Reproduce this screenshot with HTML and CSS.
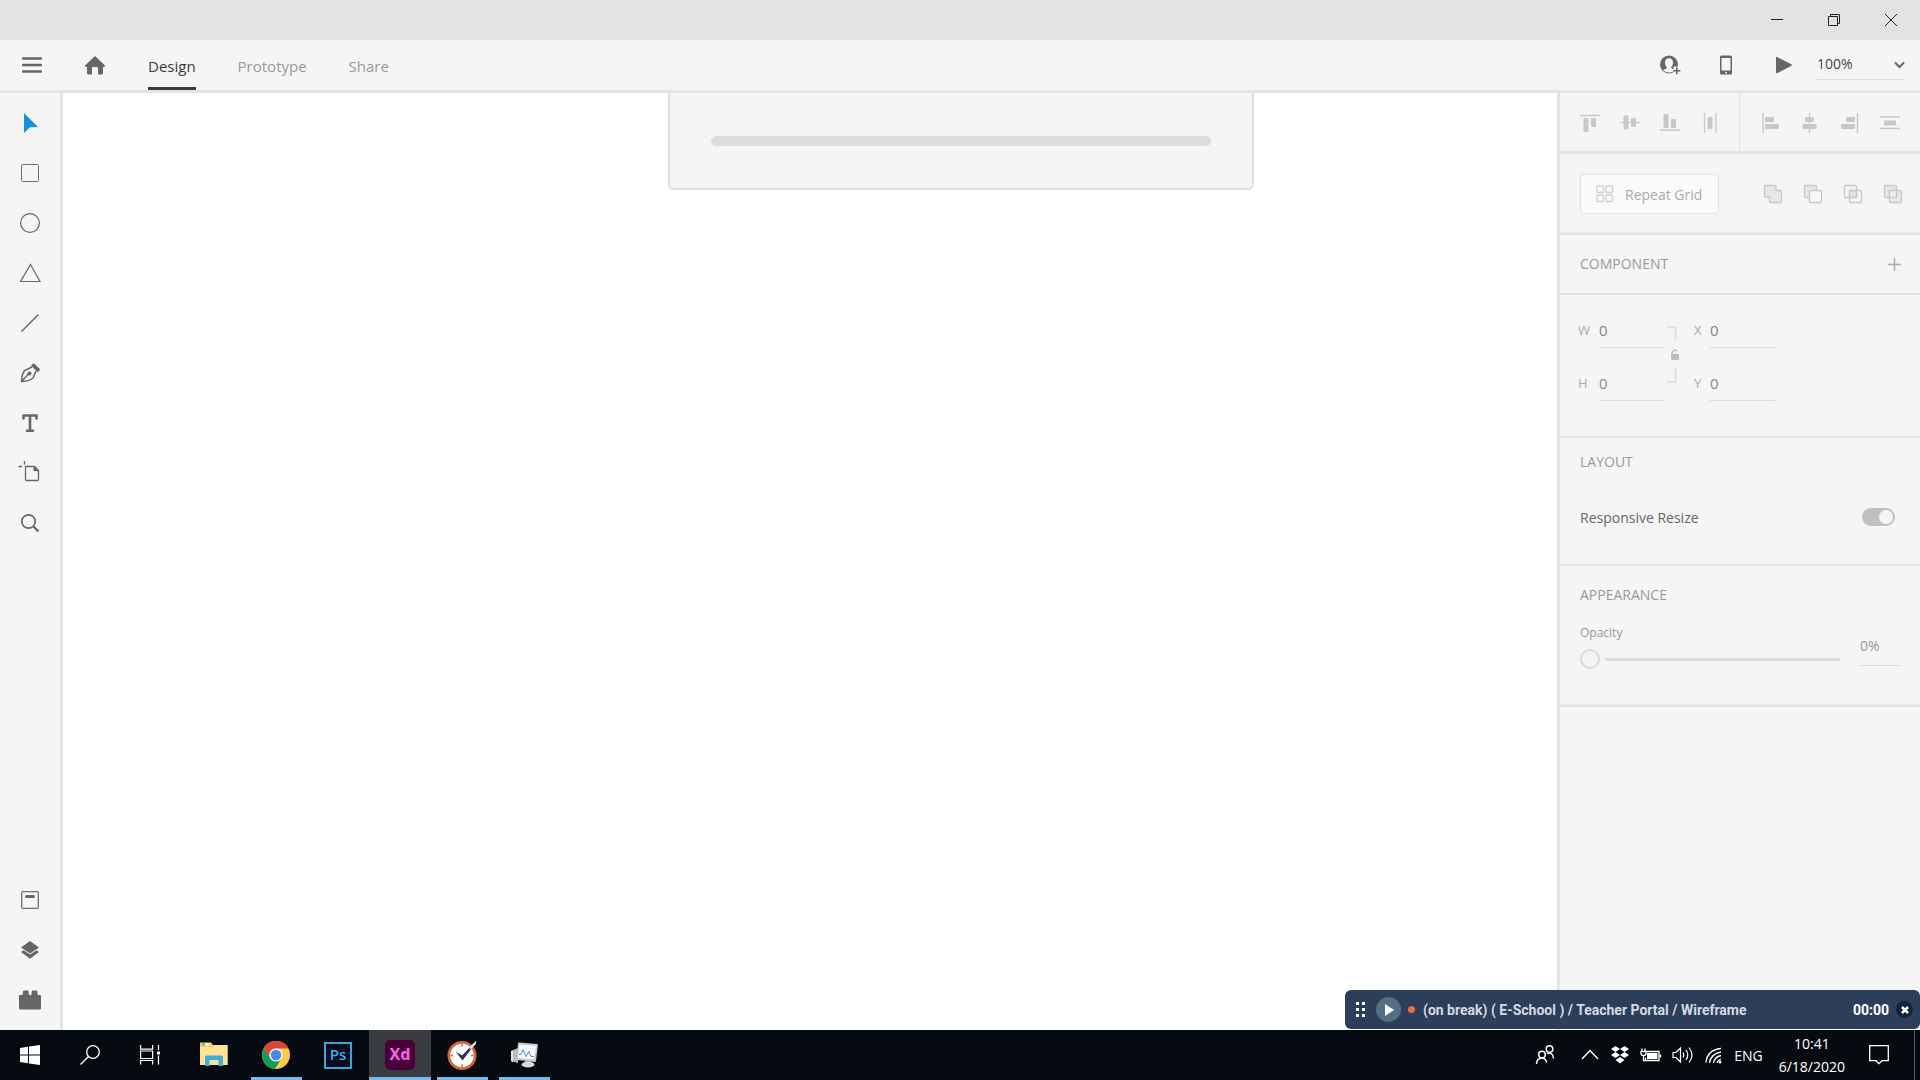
FILE: index.html
```html
<!DOCTYPE html>
<html lang="en">
<head>
  <meta charset="UTF-8">
  <title>Design</title>
  <meta name="viewport" content="width=device-width, initial-scale=1">
  <link rel="stylesheet" href="styles.css">
</head>
<body>
  <header class="titlebar">
    <button class="win-button" aria-label="Minimize"><svg width="12" height="12"><path d="M0 5.5h12" stroke="#222"/></svg></button>
    <button class="win-button" aria-label="Restore"><svg width="12" height="12" fill="none" stroke="#222"><path d="M.5 2.5h9v9h-9zM2.5 2.5v-2h9v9h-2"/></svg></button>
    <button class="win-button" aria-label="Close"><svg width="12" height="12" stroke="#222"><path d="M0 0l12 12M12 0L0 12"/></svg></button>
  </header>

  <div class="toolbar">
    <button class="icon-button menu-button" aria-label="Menu"><svg width="20" height="16"><path d="M1 1.5h18M1 8h18M1 14.5h18" stroke="#666" stroke-width="2.4" stroke-linecap="round"/></svg></button>
    <button class="icon-button home-button" aria-label="Home"><svg width="20" height="19" fill="#666"><path d="M10 0L20 9.500Q20 11 18.500 11H18v6q0 1.500-1.500 1.500H13V12q0-1-1-1H8q-1 0-1 1v6.500H3.500Q2 18.500 2 17v-6H1.500Q0 11 0 9.500z"/></svg></button>
    <nav class="tabs">
      <a class="tab active" href="#design">Design</a>
      <a class="tab" href="#prototype">Prototype</a>
      <a class="tab" href="#share">Share</a>
    </nav>
    <div class="toolbar-right">
      <button class="icon-button" aria-label="Invite"><svg width="24" height="20"><circle cx="11" cy="9.500" r="9" fill="#666"/><path d="M11 3.200c2.600 0 4 1.800 4 4.300 0 1.900-.7 3.300-1.600 4.200-.3 1.300 0 1.900 1.300 2.400l2.300.9q-2.500 2.500-6 2.500t-6-2.500l2.300-.9c1.300-.5 1.600-1.100 1.300-2.400C7.700 10.800 7 9.400 7 7.500c0-2.500 1.400-4.300 4-4.300z" fill="#f5f5f5"/><path d="M15.500 11.500H22v8h-6.500z" fill="#f5f5f5"/><path d="M18.800 12.200v7M15.300 15.700h7" stroke="#666" stroke-width="1.600"/></svg></button>
      <button class="icon-button" aria-label="Mobile preview"><svg width="13" height="20"><path fill="#666" fill-rule="evenodd" d="M1.500.5h9q1.500 0 1.500 1.500v16q0 1.500-1.500 1.500h-9Q0 19.500 0 18V2Q0 .5 1.500.5zM1.500 3v12.500h9V3zM5 17v1.200h2V17z"/></svg></button>
      <button class="icon-button" aria-label="Play"><svg width="16" height="18"><path fill="#666" d="M0 1.500Q0 .5 1 1l14.500 7.300q.8.700 0 1.400L1 17.200q-1 .3-1-.7z"/></svg></button>
      <div class="zoom-box">
        <select class="zoom-select" aria-label="Zoom">
          <option>100%</option>
        </select>
        <svg class="zoom-arrow" width="11" height="8"><path d="M1 1.500l4.500 4.500L10 1.500" fill="none" stroke="#666" stroke-width="2"/></svg>
      </div>
    </div>
  </div>

  <main class="workspace">
    <aside class="tools">
      <button class="tool" aria-label="Select"><svg width="20" height="20"><path fill="#1391e9" d="M4 0l14 14-8 .3L4 20z"/></svg></button>
      <button class="tool" aria-label="Rectangle"><svg width="20" height="20"><rect x="1.500" y="1.500" width="17" height="17" rx="1" fill="none" stroke="#707070"/></svg></button>
      <button class="tool" aria-label="Ellipse"><svg width="20" height="20"><circle cx="10" cy="10" r="9.400" fill="none" stroke="#666" stroke-width="1.200"/></svg></button>
      <button class="tool" aria-label="Polygon"><svg width="22" height="20"><path d="M11.500 1.500l9.500 17H1.500z" fill="none" stroke="#666" stroke-width="1.200"/></svg></button>
      <button class="tool" aria-label="Line"><svg width="20" height="20"><path d="M1.500 18.500l17-17" stroke="#666" stroke-width="1.500"/></svg></button>
      <button class="tool" aria-label="Pen"><svg width="20" height="20"><path d="M12 4L4.500 7.500Q1.500 12 1.600 18.400 8.500 18.500 13 15l3-7M2 18l7-7.500" fill="none" stroke="#666" stroke-width="1.500"/><circle cx="9.500" cy="10.500" r="2" fill="#666"/><path d="M13 .8q.7-.8 1.400 0l5.200 5q.7.800 0 1.500l-1.800 1.900-6.800-6.500z" fill="#666"/></svg></button>
      <button class="tool" aria-label="Text"><svg width="20" height="20"><path d="M3.500 5.500V2.500h13v3M10 2.500v15M7 17.800h6" fill="none" stroke="#666" stroke-width="2.600" stroke-linecap="round" stroke-linejoin="round"/></svg></button>
      <button class="tool" aria-label="Artboard"><svg width="24" height="24"><path d="M7.500 5.500h9l4 4v9q0 1-1 1h-11q-1 0-1-1zM.5 5.500H4M6.500 0v3.500" fill="none" stroke="#666" stroke-width="1.300"/><path d="M15.500 5l5.500 5h-5.500z" fill="#666"/></svg></button>
      <button class="tool" aria-label="Zoom"><svg width="20" height="20"><circle cx="8.500" cy="8.500" r="6.700" fill="none" stroke="#666" stroke-width="1.700"/><path d="M13.500 13.500l5 5" stroke="#666" stroke-width="2.200"/></svg></button>
      <button class="tool tool-bottom" aria-label="Assets"><svg width="20" height="20"><rect x="1.700" y="1.700" width="16.600" height="16.600" rx="1" fill="none" stroke="#707070" stroke-width="1.300"/><rect x="5" y="5" width="10" height="3" rx="1.500" fill="#666"/></svg></button>
      <button class="tool" aria-label="Layers"><svg width="20" height="20" fill="#666"><path d="M10 1l9 6.500-9 6-9-6z"/><path d="M1 12l2.500-1.700L10 14.600l6.500-4.300L19 12l-9 6.800z"/></svg></button>
      <button class="tool" aria-label="Plugins"><svg width="22" height="20" fill="#666"><path d="M1 5h2.500l.5-3.500Q4 .5 5 .5h3.500q1 0 1 1L10 5h2.300l.5-3.500q0-1 1-1h3.500q1 0 1 1L18.800 5H21q1 0 1 1v12.500q0 1-1 1H1q-1 0-1-1V6q0-1 1-1z"/></svg></button>
    </aside>

    <section class="canvas">
      <div class="artboard-card"><div class="artboard-line"></div></div>
    </section>

    <aside class="panel">
      <div class="align-row">
        <div class="align-group">
          <button class="prop-icon" aria-label="Align top"><svg width="20" height="20"><path d="M0 2.500h20" stroke="#c8c8c8" stroke-width="1.600"/><rect x="3.500" y="5" width="5" height="14" rx="1"/><rect x="11" y="5" width="5" height="9" rx="1"/></svg></button>
          <button class="prop-icon" aria-label="Align middle"><svg width="20" height="20"><path d="M0 9.500h20" stroke="#c8c8c8" stroke-width="1.300"/><rect x="3.500" y="2.500" width="5" height="14" rx="1"/><rect x="11" y="5" width="5" height="9" rx="1"/></svg></button>
          <button class="prop-icon" aria-label="Align bottom"><svg width="20" height="20"><path d="M0 17h20" stroke="#c8c8c8" stroke-width="1.600"/><rect x="3.500" y="1" width="5" height="14" rx="1"/><rect x="11" y="6" width="5" height="9" rx="1"/></svg></button>
          <button class="prop-icon" aria-label="Distribute horizontally"><svg width="20" height="20"><path d="M4.500 0v20M16 0v20" stroke="#c8c8c8" stroke-width="1.300"/><rect x="7.500" y="4" width="5" height="12" rx="1"/></svg></button>
        </div>
        <div class="align-group align-end">
          <button class="prop-icon" aria-label="Align left"><svg width="20" height="20"><path d="M3 0v20" stroke="#c8c8c8" stroke-width="1.500"/><rect x="5" y="4" width="9" height="5" rx="1"/><rect x="5" y="11" width="14" height="5" rx="1"/></svg></button>
          <button class="prop-icon" aria-label="Align center"><svg width="20" height="20"><path d="M9.500 0v20" stroke="#c8c8c8" stroke-width="1.300"/><rect x="5" y="4" width="9" height="5" rx="1"/><rect x="2.500" y="11" width="14" height="5" rx="1"/></svg></button>
          <button class="prop-icon" aria-label="Align right"><svg width="20" height="20"><path d="M17.500 0v20" stroke="#c8c8c8" stroke-width="1.500"/><rect x="6" y="4" width="9" height="5" rx="1"/><rect x="1" y="11" width="14" height="5" rx="1"/></svg></button>
          <button class="prop-icon" aria-label="Distribute vertically"><svg width="20" height="20"><path d="M0 4h20M0 15.500h20" stroke="#c8c8c8" stroke-width="1.300"/><rect x="4" y="7.500" width="12" height="5" rx="1"/></svg></button>
        </div>
      </div>

      <div class="grid-row">
        <button class="repeat-grid"><svg width="18" height="18" fill="none" stroke="#cfcfcf" stroke-width="1.400"><rect x="1" y="1" width="6.500" height="6.500" rx="1"/><rect x="10" y="1" width="6.500" height="6.500" rx="1"/><rect x="1" y="10" width="6.500" height="6.500" rx="1"/><rect x="10" y="10" width="6.500" height="6.500" rx="1"/></svg>Repeat Grid</button>
        <div class="bool-group">
          <button class="prop-icon bool" aria-label="Add"><svg width="20" height="20"><path fill="#e7e7e7" d="M2 1.500h10q1 0 1 1v4h4.500q1 0 1 1v10q0 1-1 1H7.500q-1 0-1-1V13H2.500q-1 0-1-1V2q0-.5.500-.5z"/></svg></button>
          <button class="prop-icon bool" aria-label="Subtract"><svg width="20" height="20"><rect x="1.500" y="1.500" width="12" height="12" rx="1" fill="#e7e7e7"/><rect x="6.500" y="6.500" width="12" height="12" rx="1" fill="#f8f8f8"/></svg></button>
          <button class="prop-icon bool" aria-label="Intersect"><svg width="20" height="20"><rect x="6.500" y="6.500" width="7" height="7" fill="#e2e2e2"/><rect x="1.500" y="1.500" width="12" height="12" rx="1" fill="none"/><rect x="6.500" y="6.500" width="12" height="12" rx="1" fill="none"/></svg></button>
          <button class="prop-icon bool" aria-label="Exclude overlap"><svg width="20" height="20"><rect x="1.500" y="1.500" width="12" height="12" rx="1" fill="#e7e7e7"/><rect x="6.500" y="6.500" width="12" height="12" rx="1" fill="#e7e7e7"/><rect x="6.500" y="6.500" width="7" height="7" fill="#eee"/></svg></button>
        </div>
      </div>

      <div class="component-row">
        <h2 class="heading">COMPONENT</h2>
        <button class="icon-button" aria-label="Add component"><svg width="13" height="13"><path d="M6.500 0v13M0 6.500h13" stroke="#b0b0b0" stroke-width="1.500"/></svg></button>
      </div>

      <div class="transform">
        <div class="field-column">
          <label class="field"><span>W</span><input type="text" value="0"></label>
          <label class="field"><span>H</span><input type="text" value="0"></label>
        </div>
        <svg class="link" width="12" height="60"><path d="M0 2h8.500v13M0 57h8.500V43" fill="none" stroke="#dcdcdc" stroke-width="1.500"/><path d="M5 30v-2.500a3 3 0 0 1 5-1.500" fill="none" stroke="#c0c0c0" stroke-width="1.500"/><rect x="4" y="29" width="8" height="6" rx="1" fill="#bdbdbd"/></svg>
        <div class="field-column">
          <label class="field field-pos"><span>X</span><input type="text" value="0"></label>
          <label class="field field-pos"><span>Y</span><input type="text" value="0"></label>
        </div>
      </div>

      <div class="layout-section">
        <h2 class="heading">LAYOUT</h2>
        <div class="resize-row">
          <label for="resize">Responsive Resize</label>
          <input class="toggle" type="checkbox" id="resize" checked>
        </div>
      </div>

      <div class="appearance">
        <h2 class="heading">APPEARANCE</h2>
        <div class="opacity-row">
          <div class="opacity-main">
            <label for="opacity">Opacity</label>
            <input class="slider" type="range" id="opacity" min="0" max="100" value="0">
          </div>
          <input class="opacity-value" type="text" value="0%" aria-label="Opacity value">
        </div>
      </div>
    </aside>
  </main>

  <div class="timer">
    <svg class="timer-grip" width="10" height="15" fill="#fff"><path d="M0 0h3v3H0zM6 0h3v3H6zM0 6h3v3H0zM6 6h3v3H6zM0 12h3v3H0zM6 12h3v3H6z"/></svg>
    <button class="timer-play" aria-label="Start timer"><svg width="9" height="12"><path d="M0 0l9 6-9 6z" fill="#fff"/></svg></button>
    <span class="timer-dot"></span>
    <span class="timer-task">(on break) ( E-School ) / Teacher Portal / Wireframe</span>
    <span class="timer-time">00:00</span>
    <button class="timer-close" aria-label="Close timer"><svg width="8" height="8"><path d="M1 1l6 6M7 1L1 7" stroke="#fff" stroke-width="2.500"/></svg></button>
  </div>

  <footer class="taskbar">
    <button class="start-item" aria-label="Start"><svg width="20" height="20" fill="#fff"><path d="M0 3l8-1.200v7.700H0zM9 1.600L20 0v9.500H9zM0 10.500h8v7.700L0 17zM9 10.500h11V20L9 18.400z"/></svg></button>
    <button class="start-item" aria-label="Search"><svg width="20" height="20" fill="none" stroke="#fff" stroke-width="1.300"><circle cx="13" cy="7" r="6.300"/><path d="M8.500 11.500L.5 19.500"/></svg></button>
    <button class="start-item" aria-label="Task view"><svg width="20" height="20" fill="none" stroke="#fff" stroke-width="1.200"><path d="M.6 0v4.200h12V0M.6 19.500v-4h12v4M.6 6h12v7.500H.6zM18.500 0v5M18.500 10.500v9"/><path d="M17 6.500h3v3h-3z" fill="#fff" stroke="none"/></svg></button>
    <div class="apps">
      <button class="app" aria-label="Files"><svg width="28" height="28"><path d="M0 1.500h11l2 2.500h14.500v20H0z" fill="#f9ce62"/><path d="M0 6h13l2-2h12.500v20H0z" fill="#ffe394"/><path d="M2 2.500h7v2H2z" fill="#fff"/><path d="M2 2.500h3v2H2z" fill="#42b979"/><path d="M5 25v-9q0-1.500 1.500-1.500h15q1.500 0 1.500 1.500v9h-4.500v-6h-9v6z" fill="#40afd8"/></svg></button>
      <button class="app open" aria-label="Chrome"><svg width="28" height="28"><circle cx="14" cy="14" r="14" fill="#ffcd42"/><path d="M1.900 7a14 14 0 0 0 11 21l6.600-10.500L14 14 8.500 17.500z" fill="#0f9d58"/><path d="M1.900 7A14 14 0 0 1 26.500 7.500H14A6.500 6.500 0 0 0 8 17z" fill="#db4437"/><circle cx="14" cy="14" r="6.600" fill="#f1f1f1"/><circle cx="14" cy="14" r="5.200" fill="#4587f3"/></svg></button>
      <button class="app" aria-label="Photoshop"><span class="ps">Ps</span></button>
      <button class="app open current" aria-label="XD"><span class="xd">Xd</span></button>
      <button class="app open" aria-label="Time tracker"><svg width="30" height="30"><circle cx="15" cy="15.500" r="14.500" fill="#d9672d"/><circle cx="15" cy="15.500" r="11.800" fill="#fff"/><path d="M15 4v2.500M15 24.500V27M3.500 15.500H6M24 15.500h2.500" stroke="#d9672d" stroke-width="1.500"/><path d="M8.500 11.500l6.500 4L26 4l1 1.500L15.500 20.500z" fill="#29364b"/><path d="M22 7.500L29.500.5l-1 4-5 5z" fill="#e4e4e4"/></svg></button>
      <button class="app open" aria-label="Resource monitor"><svg width="28" height="28"><path d="M1 10l7-3v15l-7-2z" fill="#b9bcbd"/><path d="M1 10l2-.5v12L1 20z" fill="#e4e4e4"/><path d="M8 2.500q0-1 1-1L27 3q1 0 .9 1L26 20q-.2 1-1 .9L7.500 19q-1 0-.9-1z" fill="#c8cacb"/><path d="M9.500 3.500L26 5l-1.800 13.500L8 17z" fill="#f7faff"/><path d="M9 13.500h2l2-5 3 7 3-5 2 5h3" fill="none" stroke="#4d91d4"/><path d="M15 20h6l1 3h-7z" fill="#a5a8a9"/><ellipse cx="18" cy="23.500" rx="6.500" ry="3" fill="#dadcdd"/></svg></button>
    </div>

    <div class="tray">
      <svg class="people" width="20" height="20" fill="none" stroke="#fff" stroke-width="1.500"><circle cx="14.500" cy="4" r="3.300"/><circle cx="7" cy="9.500" r="3.300"/><path d="M1.500 19q0-5.500 5.500-6 4 .3 4.500 4.500M12 8.500q6-2 6.500 5"/></svg>
      <svg width="20" height="20" fill="none" stroke="#fff" stroke-width="1.400"><path d="M2 14l8-8.500 8 8.500"/></svg>
      <svg width="20" height="20" fill="#fff"><path d="M5.500 1L10 4 5.500 7 1 4zM14.500 1L19 4l-4.500 3L10 4zM5.500 7l4.500 3-4.500 3L1 10zM14.500 7l4.500 3-4.500 3-4.500-3zM10 12l4.500 3-4.500 3.500L5.500 15z"/></svg>
      <svg width="22" height="20"><path d="M5.500 6.500H19v9H5.500v-3M20.500 9.500v3M2 3.500v3M5 3.500v3M1 6.500h5v2q0 2-2.500 2T1 8.500zM3.500 10.500v5h2" fill="none" stroke="#fff" stroke-width="1.300"/><path d="M7 8h10.500v6H7z" fill="#fff"/></svg>
      <svg width="22" height="20" fill="none" stroke="#fff" stroke-width="1.200"><path d="M1 7.500h3L8.500 3v14L4 12.500H1zM11 7.500q1.500 2.500 0 5M14 5q3.500 5 0 10M17 2.500q6 7.500 0 15"/></svg>
      <svg width="20" height="20" fill="none" stroke="#fff" stroke-width="1.300"><path d="M2 17.500Q3 5 17 3.500M5.500 18Q6.500 9 17 7M9.500 18q1-6 7.500-7.500M13 18q.5-3 4-4"/><circle cx="16" cy="17" r="1.500" fill="#fff" stroke="none"/></svg>
      <span class="lang">ENG</span>
      <div class="clock"><span>10:41</span><span>6/18/2020</span></div>
      <svg class="notice" width="20" height="20" fill="none" stroke="#fff" stroke-width="1.300"><path d="M.7.7h18.600v15H13l-3 3-3-3H.7z"/></svg>
    </div>
  </footer>
</body>
</html>
```

FILE: styles.css
```css
:root {
  --bg: #f5f5f5;
  --line: #e3e3e3;
  --title: #e3e3e3;
  --icon-off: #c8c8c8;
  --text: #444;
  --muted: #999;
  --taskbar: #060b12;
}

* { box-sizing: border-box; }

body {
  margin: 0;
  height: 100vh;
  display: flex;
  flex-direction: column;
  font-family: "Open Sans", "Noto Sans", sans-serif;
  font-size: 14px;
  color: var(--text);
  background: var(--bg);
  overflow: hidden;
}

button, input, select {
  font: inherit;
  color: inherit;
  background: none;
  border: 0;
  padding: 0;
  margin: 0;
}

svg { display: block; flex: none; }

/* window title */
.titlebar {
  height: 40px;
  flex: none;
  display: flex;
  justify-content: flex-end;
  padding-right: 1px;
  background: var(--title);
}

.win-button {
  width: 57px;
  display: grid;
  place-items: center;
}

/* top toolbar */
.toolbar {
  height: 53px;
  flex: none;
  display: flex;
  align-items: stretch;
  border-bottom: 3px solid var(--line);
}

.icon-button {
  display: grid;
  place-items: center;
}

.menu-button { width: 64px; }
.home-button { width: 62px; }

.tabs {
  display: flex;
  gap: 42px;
  margin-left: 22px;
}

.tab {
  padding-top: 14px;
  font-size: 15px;
  line-height: 24px;
  color: var(--muted);
  text-decoration: none;
}

.tab.active {
  color: #3c3c3c;
  border-bottom: 3px solid #3c3c3c;
}

.toolbar-right {
  margin-left: auto;
  display: flex;
}

.toolbar-right .icon-button { width: 57px; }

.zoom-box {
  position: relative;
  width: 88px;
  height: 30px;
  margin: 10px 15px 0 5px;
  border-bottom: 1px solid #ddd;
}

.zoom-select {
  appearance: none;
  width: 100%;
  height: 26px;
}

.zoom-arrow {
  position: absolute;
  right: 0;
  top: 11px;
  pointer-events: none;
}

/* main area */
.workspace {
  flex: 1;
  min-height: 0;
  display: flex;
}

.tools {
  width: 63px;
  flex: none;
  display: flex;
  flex-direction: column;
  padding: 5px 0;
  border-right: 3px solid var(--line);
}

.tool {
  height: 50px;
  display: grid;
  place-items: center;
}

.tool-bottom { margin-top: auto; }

.canvas {
  flex: 1;
  position: relative;
  overflow: hidden;
  background: #fff;
}

.artboard-card {
  position: absolute;
  left: 605px;
  top: -8px;
  width: 586px;
  padding: 49px 41px;
  padding-bottom: 42px;
  background: var(--bg);
  border: 2px solid #dedede;
  border-radius: 6px;
}

.artboard-line {
  height: 10px;
  border-radius: 5px;
  background: #dcdcda;
}

/* property panel */
.panel {
  width: 363px;
  flex: none;
  border-left: 3px solid var(--line);
}

.align-row {
  display: flex;
  height: 61px;
  border-bottom: 3px solid var(--line);
}

.align-group {
  width: 50%;
  display: flex;
  padding: 2px 0 0 10px;
  border-right: 1px solid var(--line);
}

.align-end { border-right: 0; }

.prop-icon {
  width: 40px;
  display: grid;
  place-items: center;
}

.prop-icon svg { fill: var(--icon-off); }

.bool svg {
  stroke: var(--icon-off);
  stroke-width: 1.3;
}

.grid-row {
  height: 81px;
  display: flex;
  align-items: center;
  justify-content: space-between;
  padding: 2px 7px 0 20px;
  border-bottom: 3px solid var(--line);
}

.repeat-grid {
  width: 139px;
  height: 40px;
  display: flex;
  align-items: center;
  gap: 11px;
  padding-left: 15px;
  color: #aaa;
  background: #fafafa;
  border: 1px solid #e2e2e2;
  border-radius: 4px;
}

.bool-group { display: flex; }

.heading {
  margin: 0;
  font-size: 14px;
  font-weight: normal;
  line-height: 20px;
  color: var(--muted);
}

.component-row {
  height: 60px;
  display: flex;
  align-items: center;
  justify-content: space-between;
  padding: 0 19px 0 20px;
  border-bottom: 2px solid var(--line);
}

.transform {
  height: 143px;
  display: flex;
  padding: 23px 18px 0;
  border-bottom: 2px solid var(--line);
}

.field-column {
  display: flex;
  flex-direction: column;
  gap: 23px;
}

.field {
  display: flex;
  height: 30px;
  line-height: 24px;
  color: #aaa;
  font-size: 13px;
}

.field span { width: 21px; }
.field-pos span { width: 16px; }

.field input {
  width: 65px;
  height: 30px;
  padding-bottom: 5px;
  font-size: 15px;
  color: #888;
  border-bottom: 1px solid #ddd;
}

.link { margin: 7px 15px 0 3px; }

.layout-section {
  height: 128px;
  padding: 14px 25px 0 20px;
  border-bottom: 2px solid var(--line);
}

.resize-row {
  display: flex;
  align-items: center;
  justify-content: space-between;
  margin-top: 35px;
  height: 20px;
  color: #666;
}

.toggle {
  appearance: none;
  width: 33px;
  height: 18px;
  padding: 2px;
  border-radius: 9px;
  background: #c0c0c0;
  display: flex;
}

.toggle::before {
  content: "";
  width: 14px;
  height: 14px;
  border-radius: 50%;
  background: var(--bg);
}

.toggle:checked { justify-content: flex-end; }

.appearance {
  height: 141px;
  padding: 19px 20px 0;
  border-bottom: 3px solid var(--line);
}

.opacity-row {
  display: flex;
  gap: 20px;
  margin-top: 18px;
  color: var(--muted);
}

.opacity-main {
  flex: 1;
  display: flex;
  flex-direction: column;
  gap: 6px;
  font-size: 12px;
  line-height: 20px;
}

.slider {
  appearance: none;
  width: 100%;
  height: 20px;
}

.slider::-webkit-slider-runnable-track {
  height: 3px;
  background: #dcdcdc;
}

.slider::-webkit-slider-thumb {
  appearance: none;
  width: 20px;
  height: 20px;
  margin-top: -9px;
  border: 2px solid #dadada;
  border-radius: 50%;
  background: var(--bg);
  box-shadow: 0 0 0 5px var(--bg);
}

.opacity-value {
  width: 40px;
  height: 30px;
  margin-top: 13px;
  padding-bottom: 10px;
  border-bottom: 1px solid #ddd;
}

/* floating time tracker */
.timer {
  position: absolute;
  right: 0;
  bottom: 51px;
  width: 575px;
  height: 39px;
  display: flex;
  align-items: center;
  padding: 0 7px 0 11px;
  border-radius: 6px;
  background: #2c3e5a;
  color: #fff;
  font-family: Roboto, sans-serif;
  font-size: 14px;
  font-weight: bold;
}

.timer-play {
  width: 25px;
  height: 25px;
  margin: 0 7px 0 10px;
  padding-left: 2px;
  display: grid;
  place-items: center;
  border-radius: 50%;
  background: #527080;
}

.timer-dot {
  width: 7px;
  height: 7px;
  border-radius: 50%;
  background: #f26b3a;
}

.timer-task {
  margin-left: 8px;
  color: #d5dae3;
}

.timer-time { margin-left: auto; }

.timer-close {
  width: 17px;
  height: 17px;
  margin-left: 7px;
  display: grid;
  place-items: center;
  border-radius: 50%;
  background: #14223f;
}

/* system taskbar */
.taskbar {
  height: 50px;
  flex: none;
  display: flex;
  background: var(--taskbar);
  color: #fff;
}

.start-item {
  width: 60px;
  display: grid;
  place-items: center;
}

.apps {
  display: flex;
  margin-left: 3px;
}

.app {
  position: relative;
  width: 62px;
  display: grid;
  place-items: center;
}

.app.open::after {
  content: "";
  position: absolute;
  left: 6px;
  right: 5px;
  bottom: 0;
  height: 3px;
  background: #76b9ed;
}

.app.current { background: #393d42; }

.app.current::after {
  left: 0;
  right: 0;
}

.ps {
  width: 28px;
  height: 27px;
  border: 2px solid #35a8d8;
  background: #060b22;
  color: #35b5e8;
  font-size: 15px;
  font-weight: 600;
  line-height: 21px;
}

.xd {
  width: 30px;
  height: 30px;
  border-radius: 5px;
  background: #470137;
  color: #ff61f6;
  font-size: 16px;
  font-weight: bold;
  line-height: 28px;
}

.tray {
  margin-left: auto;
  display: flex;
  align-items: center;
  gap: 10px;
  padding-right: 5px;
  border-right: 1px solid #555a60;
  margin-right: 5px;
}

.people { margin-right: 15px; }

.clock {
  display: flex;
  flex-direction: column;
  align-items: center;
  margin-left: 6px;
  line-height: 23px;
}

.notice { margin: 0 20px 0 14px; }
```
